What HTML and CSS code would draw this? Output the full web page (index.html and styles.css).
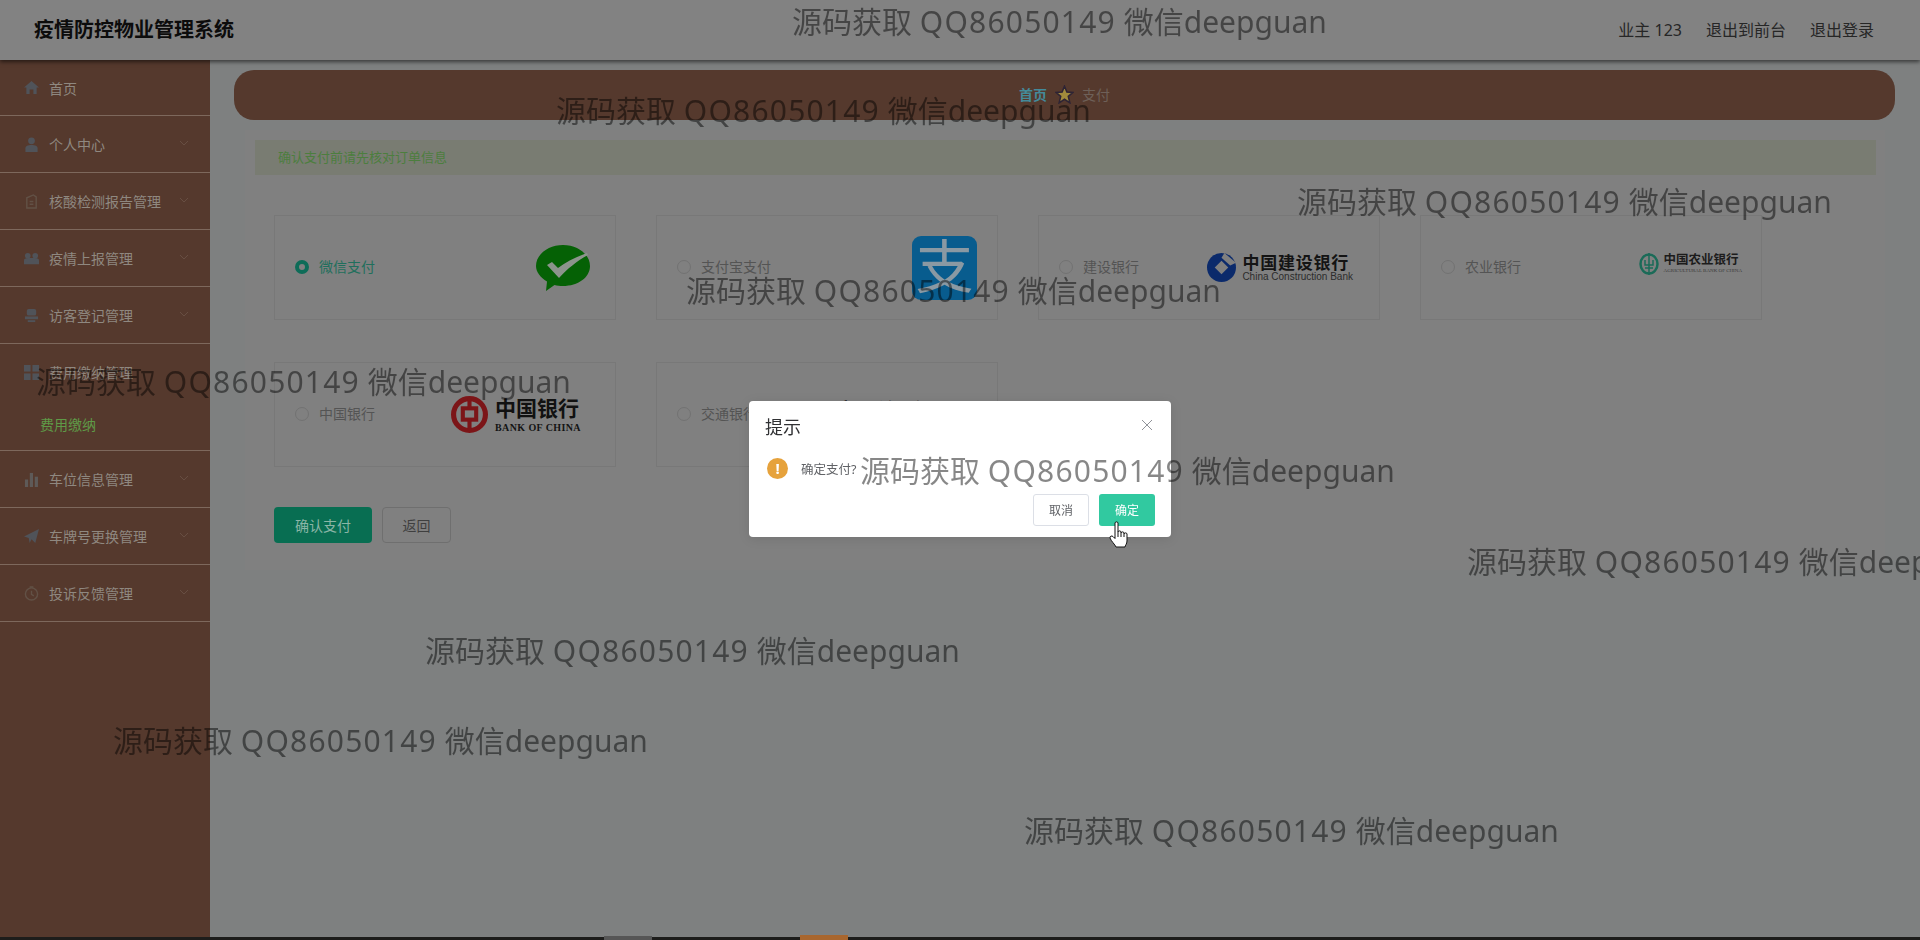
FILE: index.html

```html
<!DOCTYPE html>
<html lang="zh-CN">
<head>
  <meta charset="UTF-8">
  <title>疫情防控物业管理系统</title>
  <link rel="stylesheet" href="styles.css">
</head>
<body>

<header class="topbar">
  <div class="brand">疫情防控物业管理系统</div>
  <nav class="top-links">
    <a>业主 123</a>
    <a>退出到前台</a>
    <a>退出登录</a>
  </nav>
</header>

<div class="main">
  <aside class="sidebar">
    <div class="menu-item menu-first">
      <svg class="menu-icon icon-blue" viewBox="0 0 16 16"><path d="M8 1 L16 8 H13.5 V15 H10 V10 H6 V15 H2.5 V8 H0 Z"/></svg>
      <span>首页</span>
    </div>
    <div class="menu-item">
      <svg class="menu-icon icon-blue" viewBox="0 0 16 16"><circle cx="8" cy="4" r="3.6"/><path d="M1.5 16 V12 C1.5 9.5 4 8.5 8 8.5 C12 8.5 14.5 9.5 14.5 12 V16 Z"/></svg>
      <span>个人中心</span>
      <svg class="chevron" viewBox="0 0 10 6"><path d="M1 1 L5 5 L9 1"/></svg>
    </div>
    <div class="menu-item">
      <svg class="menu-icon icon-faint" viewBox="0 0 16 16"><path d="M3 15 V4 L10 1 L13 3 V15 Z M6 8 H10 M6 11 H10" fill="none"/></svg>
      <span>核酸检测报告管理</span>
      <svg class="chevron" viewBox="0 0 10 6"><path d="M1 1 L5 5 L9 1"/></svg>
    </div>
    <div class="menu-item">
      <svg class="menu-icon icon-blue" viewBox="0 0 16 16"><circle cx="4" cy="5" r="3"/><circle cx="12" cy="5" r="3"/><path d="M0 14 V10 C0 8 2 7.5 8 7.5 C14 7.5 16 8 16 10 V14 Z"/></svg>
      <span>疫情上报管理</span>
      <svg class="chevron" viewBox="0 0 10 6"><path d="M1 1 L5 5 L9 1"/></svg>
    </div>
    <div class="menu-item">
      <svg class="menu-icon icon-blue" viewBox="0 0 16 16"><rect x="3" y="1" width="10" height="7" rx="2"/><rect x="1" y="9" width="14" height="3"/><rect x="4" y="13" width="8" height="2"/></svg>
      <span>访客登记管理</span>
      <svg class="chevron" viewBox="0 0 10 6"><path d="M1 1 L5 5 L9 1"/></svg>
    </div>
    <div class="menu-group">
      <div class="menu-head">
        <svg class="menu-icon icon-blue" viewBox="0 0 16 16"><rect x="0" y="0" width="7" height="7"/><rect x="9" y="0" width="7" height="7"/><rect x="0" y="9" width="7" height="7"/><rect x="9" y="9" width="7" height="7"/></svg>
        <span>费用缴纳管理</span>
      </div>
      <div class="menu-sub">费用缴纳</div>
    </div>
    <div class="menu-item">
      <svg class="menu-icon icon-grey" viewBox="0 0 16 16"><rect x="1" y="8" width="3.4" height="8"/><rect x="6.2" y="1" width="3.4" height="15"/><rect x="11.5" y="5" width="3.4" height="11"/></svg>
      <span>车位信息管理</span>
      <svg class="chevron" viewBox="0 0 10 6"><path d="M1 1 L5 5 L9 1"/></svg>
    </div>
    <div class="menu-item">
      <svg class="menu-icon icon-blue" viewBox="0 0 16 16"><path d="M16 0 L12 15 L8 11 L6 15 L5 9.5 L0 8 Z"/></svg>
      <span>车牌号更换管理</span>
      <svg class="chevron" viewBox="0 0 10 6"><path d="M1 1 L5 5 L9 1"/></svg>
    </div>
    <div class="menu-item">
      <svg class="menu-icon icon-faint" viewBox="0 0 16 16"><circle cx="8" cy="8.5" r="6.5" fill="none"/><path d="M8 5 V9 L10.5 10.5 M6 1 H10" fill="none"/></svg>
      <span>投诉反馈管理</span>
      <svg class="chevron" viewBox="0 0 10 6"><path d="M1 1 L5 5 L9 1"/></svg>
    </div>
  </aside>

  <main class="content">
    <div class="crumbs">
      <span class="crumb-home">首页</span>
      <svg class="crumb-star" viewBox="0 0 16 16"><path d="M8 1 L10 6 L15 6.3 L11.2 9.6 L12.5 15 L8 12 L3.5 15 L4.8 9.6 L1 6.3 L6 6 Z"/></svg>
      <span class="crumb-now">支付</span>
    </div>

    <section class="pay-panel">
      <div class="alert">确认支付前请先核对订单信息</div>

      <div class="pay-grid">
        <label class="pay-card">
          <span class="radio radio-on"></span>
          <span class="pay-name name-on">微信支付</span>
          <svg class="logo-wechat" viewBox="0 0 54 46">
            <path class="wechat-bubble" d="M27 0 C42 0 54 9.500 54 21 C54 32.500 42 41 27 41 C24 41 21 40.700 18.500 40 L10 46 L11 36.500 C4.500 32.500 0 27 0 21 C0 9.500 12 0 27 0 Z"/>
            <path class="wechat-tick" d="M11 20 L16 17 L22 23 C30 17 40 12 51 8 L52 10 C41 16 31 24 23 33 Z"/>
          </svg>
        </label>

        <label class="pay-card">
          <span class="radio"></span>
          <span class="pay-name">支付宝支付</span>
          <div class="logo-alipay">支</div>
        </label>

        <label class="pay-card">
          <span class="radio"></span>
          <span class="pay-name">建设银行</span>
          <div class="logo-bank logo-ccb">
            <svg class="ccb-mark" viewBox="0 0 30 30">
              <circle cx="15" cy="15" r="15" fill="#0b2a6b"/>
              <path d="M15 8 L22 15 L15 22 L8 15 Z" fill="#7f7f7f"/>
              <path d="M18 0 L30 10 L24 13 L15 5 Z" fill="#7f7f7f"/>
            </svg>
            <div>
              <div class="ccb-cn">中国建设银行</div>
              <div class="ccb-en">China Construction Bank</div>
            </div>
          </div>
        </label>

        <label class="pay-card">
          <span class="radio"></span>
          <span class="pay-name">农业银行</span>
          <div class="logo-bank logo-abc">
            <svg class="abc-mark" viewBox="0 0 20 22">
              <ellipse cx="10" cy="11" rx="8.500" ry="9.500" fill="none" stroke="#1b6b58" stroke-width="2.500"/>
              <path d="M10 0 V22 M6 7 V12 H14 V7 M6 15 H14" fill="none" stroke="#1b6b58" stroke-width="1.500"/>
            </svg>
            <div>
              <div class="abc-cn">中国农业银行</div>
              <div class="abc-en">AGRICULTURAL BANK OF CHINA</div>
            </div>
          </div>
        </label>

        <label class="pay-card">
          <span class="radio"></span>
          <span class="pay-name">中国银行</span>
          <div class="logo-bank logo-boc">
            <svg class="boc-mark" viewBox="0 0 36 36">
              <circle cx="18" cy="18" r="15.500" fill="none" stroke="#7c1518" stroke-width="5"/>
              <rect x="11.500" y="12" width="13" height="11" fill="none" stroke="#7c1518" stroke-width="4"/>
              <path d="M18 2 V12 M18 23 V34" stroke="#7c1518" stroke-width="4"/>
            </svg>
            <div>
              <div class="boc-cn">中国银行</div>
              <div class="boc-en">BANK OF CHINA</div>
            </div>
          </div>
        </label>

        <label class="pay-card">
          <span class="radio"></span>
          <span class="pay-name">交通银行</span>
          <div class="logo-comm">交通银行</div>
        </label>
      </div>

      <div class="actions">
        <button class="btn-confirm">确认支付</button>
        <button class="btn-back">返回</button>
      </div>
    </section>
  </main>
</div>

<div class="taskbar">
  <span class="task task-grey"></span>
  <span class="task task-orange"></span>
</div>

<!-- confirm dialog -->
<div class="dialog-wrap">
  <div class="dialog">
    <div class="dialog-head">
      <span class="dialog-title">提示</span>
      <svg class="dialog-close" viewBox="0 0 12 12"><path d="M1 1 L11 11 M11 1 L1 11"/></svg>
    </div>
    <div class="dialog-body">
      <span class="warn-icon">!</span>
      <span class="dialog-msg">确定支付?</span>
    </div>
    <div class="dialog-btns">
      <button class="btn-cancel">取消</button>
      <button class="btn-ok">确定</button>
    </div>
  </div>
</div>

<!-- repeated text stamped over the whole page -->
<div class="marks">
  <div class="mark mark-1">源码获取 <span class="mark-qq">QQ86050149</span> 微信deepguan</div>
  <div class="mark mark-2">源码获取 <span class="mark-qq">QQ86050149</span> 微信deepguan</div>
  <div class="mark mark-3">源码获取 <span class="mark-qq">QQ86050149</span> 微信deepguan</div>
  <div class="mark mark-4">源码获取 <span class="mark-qq">QQ86050149</span> 微信deepguan</div>
  <div class="mark mark-5">源码获取 <span class="mark-qq">QQ86050149</span> 微信deepguan</div>
  <div class="mark mark-6">源码获取 <span class="mark-qq">QQ86050149</span> 微信deepguan</div>
  <div class="mark mark-7">源码获取 <span class="mark-qq">QQ86050149</span> 微信deepguan</div>
  <div class="mark mark-8">源码获取 <span class="mark-qq">QQ86050149</span> 微信deepguan</div>
  <div class="mark mark-9">源码获取 <span class="mark-qq">QQ86050149</span> 微信deepguan</div>
  <div class="mark mark-10">源码获取 <span class="mark-qq">QQ86050149</span> 微信deepguan</div>
</div>

<svg class="hand" viewBox="0 0 20 27">
  <path d="M6 2 C6 0.500 9 0.500 9 2 V11 C9 9.500 12 9.500 12 11 V12 C12 10.500 15 10.500 15 12 V13 C15 11.500 18 11.500 18 13 V20 C18 23 16 24.500 16 26 H7 C6 23.500 2 20 1 17 C0.500 15 3 14.500 4 15.500 L6 17.500 Z"/>
  <path d="M9 11 V16 M12 12 V16 M15 13 V16"/>
</svg>

</body>
</html>
```

FILE: styles.css

```css
/* colours are the dimmed ones, the whole page sits behind the dialog's mask */
* {
  box-sizing: border-box;
}

html, body {
  height: 100%;
}

body {
  margin: 0;
  height: 940px;
  overflow: hidden;
  display: flex;
  flex-direction: column;
  background-color: #7e8080;
  font-family: "Noto Sans", "Noto Sans CJK SC", sans-serif;
  font-size: 14px;
  color: #545454;
}

.topbar {
  height: 60px;
  flex-shrink: 0;
  display: flex;
  align-items: center;
  justify-content: space-between;
  padding: 0 46px 0 34px;
  background-color: #828282;
  box-shadow: 0 2px 4px rgba(0,0,0,0.55);
  position: relative;
}

.brand {
  font-size: 20px;
  font-weight: bold;
  color: #0c0c0c;
  line-height: 62px;
}

.top-links {
  display: flex;
  gap: 24px;
  font-size: 16px;
  line-height: 20px;
  margin-bottom: 1px;
  color: #262626;
}

.main {
  flex: 1;
  display: flex;
  min-height: 0;
}

.sidebar {
  width: 210px;
  flex-shrink: 0;
  background-color: #55392d;
  color: #8f8880;
}

.menu-item, .menu-head {
  height: 57px;
  display: flex;
  align-items: center;
  padding-left: 24px;
  position: relative;
}

.menu-item {
  border-bottom: 1px solid #7d685c;
}

.menu-first {
  height: 56px;
}

.menu-group {
  height: 107px;
  border-bottom: 1px solid #7d685c;
}

.menu-head {
  height: 56px;
}

.menu-sub {
  height: 50px;
  line-height: 50px;
  padding-left: 40px;
  color: #5f9a47;
}

.menu-icon {
  width: 15px;
  height: 15px;
  margin-right: 10px;
  flex-shrink: 0;
}

.icon-blue {
  fill: #505359;
}

.icon-grey {
  fill: #5e5a58;
}

.icon-faint {
  fill: none;
  stroke: #625146;
  stroke-width: 1.5;
}

.chevron {
  width: 10px;
  height: 6px;
  position: absolute;
  right: 21px;
  top: 24px;
  fill: none;
  stroke: #674e42;
  stroke-width: 1;
}

.content {
  flex: 1;
  padding: 10px 25px 0 24px;
  min-width: 0;
}

.crumbs {
  height: 50px;
  display: flex;
  align-items: center;
  justify-content: center;
  gap: 8px;
  padding: 0 0 2px 0;
  border-radius: 20px;
  background-color: #55392d;
}

.crumb-home {
  font-weight: bold;
  color: #448a9a;
}

.crumb-star {
  width: 19px;
  height: 19px;
  fill: #a18b3c;
  stroke: #2e2434;
  stroke-width: 1.3;
}

.crumb-now {
  color: #6e6058;
}

.pay-panel {
  margin: 10px 10px 0 11px;
  padding: 10px 9px 27px 10px;
  background-color: #808080;
}

.alert {
  height: 35px;
  line-height: 35px;
  padding-left: 23px;
  font-size: 13px;
  color: #4c7e3e;
  background-color: #797c72;
}

.pay-grid {
  margin: 40px 0 0 19px;
  display: grid;
  grid-template-columns: repeat(4, 342px);
  grid-auto-rows: 105px;
  gap: 42px 40px;
}

.pay-card {
  display: flex;
  align-items: center;
  padding-left: 20px;
  border: 1px solid #787878;
}

.radio {
  width: 14px;
  height: 14px;
  margin-right: 10px;
  margin-bottom: 2px;
  flex-shrink: 0;
  border: 1px solid #727272;
  border-radius: 50%;
}

.radio-on {
  border: 4px solid #0e6c58;
  background-color: #808080;
}

.pay-name {
  margin-bottom: 4px;
  color: #545454;
}

.name-on {
  color: #1f6f5c;
}

.logo-wechat {
  width: 54px;
  height: 46px;
  margin-left: auto;
  margin-right: 25px;
}

.wechat-bubble {
  fill: #056105;
}

.wechat-tick {
  fill: #8c948c;
}

.logo-alipay {
  width: 65px;
  height: 64px;
  margin-left: auto;
  margin-right: 20px;
  border-radius: 9px;
  background-color: #085c8e;
  color: #8a99a3;
  font-size: 58px;
  line-height: 60px;
  text-align: center;
}

.logo-bank {
  margin-left: auto;
  display: flex;
  align-items: center;
  color: #141414;
}

.logo-ccb {
  margin-right: 26px;
  gap: 6px;
}

.ccb-mark {
  width: 29px;
  height: 29px;
}

.ccb-cn {
  font-size: 17px;
  font-weight: bold;
  line-height: 17px;
  letter-spacing: 0.8px;
}

.ccb-en {
  font-family: "Liberation Sans", sans-serif;
  font-size: 10px;
  line-height: 11px;
  color: #2c2c2c;
}

.logo-abc {
  margin-right: 19px;
  margin-bottom: 8px;
  gap: 5px;
}

.abc-mark {
  width: 20px;
  height: 22px;
}

.abc-cn {
  font-size: 12.500px;
  font-weight: bold;
  line-height: 15px;
  color: #1c1c1c;
}

.abc-en {
  font-family: "Liberation Serif", serif;
  font-size: 5px;
  line-height: 8px;
  white-space: nowrap;
  color: #3a3a3a;
}

.logo-boc {
  margin-right: 34px;
  gap: 7px;
}

.boc-mark {
  width: 37px;
  height: 37px;
}

.boc-cn {
  font-size: 21px;
  font-weight: bold;
  line-height: 26px;
  color: #111111;
}

.boc-en {
  font-family: "Liberation Serif", serif;
  font-size: 10px;
  font-weight: bold;
  line-height: 13px;
  letter-spacing: 0.4px;
  white-space: nowrap;
}

.logo-comm {
  margin-left: auto;
  margin-right: 60px;
  margin-bottom: 3px;
  font-size: 26px;
  line-height: 30px;
  font-weight: bold;
  color: #101010;
}

.actions {
  margin: 40px 0 0 19px;
  display: flex;
  gap: 10px;
}

.actions button {
  height: 36px;
  border-radius: 4px;
  font-family: inherit;
  font-size: 14px;
  padding: 0;
}

.btn-confirm {
  width: 98px;
  border: none;
  background-color: #086e52;
  color: #8ab5a6;
}

.btn-back {
  width: 69px;
  border: 1px solid #6f6f6f;
  background-color: #808080;
  color: #3f3f3f;
}

.taskbar {
  height: 3px;
  flex-shrink: 0;
  position: relative;
  background-color: #1d1d1b;
}

.task {
  position: absolute;
  bottom: 0;
  width: 48px;
}

.task-grey {
  left: 604px;
  height: 4px;
  background-color: #565656;
}

.task-orange {
  left: 800px;
  height: 5px;
  background-color: #a8662e;
}

.dialog-wrap {
  position: fixed;
  top: 0;
  left: 0;
  right: 0;
  bottom: 0;
  display: flex;
  align-items: center;
  justify-content: center;
  padding-bottom: 2px;
}

.dialog {
  width: 422px;
  height: 136px;
  display: flex;
  flex-direction: column;
  border-radius: 4px;
  background-color: #ffffff;
  box-shadow: 0 2px 12px rgba(0,0,0,0.1);
}

.dialog-head {
  height: 49px;
  padding: 12px 18px 0 16px;
  display: flex;
  justify-content: space-between;
}

.dialog-title {
  font-size: 18px;
  line-height: 28px;
  color: #303133;
}

.dialog-close {
  width: 12px;
  height: 12px;
  margin-top: 6px;
  fill: none;
  stroke: #909399;
  stroke-width: 1;
}

.dialog-body {
  height: 36px;
  padding-left: 18px;
  display: flex;
  align-items: center;
}

.warn-icon {
  width: 21px;
  height: 21px;
  margin-right: 13px;
  border-radius: 50%;
  background-color: #e6a23c;
  color: #ffffff;
  font-size: 15px;
  font-weight: bold;
  line-height: 21px;
  text-align: center;
}

.dialog-msg {
  font-size: 12.500px;
  color: #606266;
}

.dialog-btns {
  margin-top: 8px;
  padding-right: 16px;
  display: flex;
  justify-content: flex-end;
  gap: 10px;
}

.dialog-btns button {
  width: 56px;
  height: 32px;
  padding: 0;
  border-radius: 3px;
  font-family: inherit;
  font-size: 12px;
}

.btn-cancel {
  border: 1px solid #dcdfe6;
  background-color: #ffffff;
  color: #606266;
}

.btn-ok {
  border: none;
  background-color: #31c9a0;
  color: #ffffff;
}

.marks {
  position: fixed;
  top: 0;
  left: 0;
  right: 0;
  bottom: 0;
  overflow: hidden;
  pointer-events: none;
}

.mark {
  position: absolute;
  font-family: "Noto Sans", "Noto Sans CJK SC", sans-serif;
  font-size: 30px;
  line-height: 40px;
  white-space: nowrap;
  color: rgba(0,0,0,0.47);
}

.mark-qq {
  letter-spacing: 1.2px;
}

.mark-1 { left: 792px; top: 2px; }
.mark-2 { left: 556px; top: 91px; }
.mark-3 { left: 1297px; top: 182px; }
.mark-4 { left: 686px; top: 271px; }
.mark-5 { left: 36px; top: 362px; }
.mark-6 { left: 860px; top: 451px; }
.mark-7 { left: 1467px; top: 542px; }
.mark-8 { left: 425px; top: 631px; }
.mark-9 { left: 113px; top: 721px; }
.mark-10 { left: 1024px; top: 811px; }

.hand {
  position: fixed;
  left: 1109px;
  top: 521px;
  width: 20px;
  height: 27px;
  fill: #ffffff;
  stroke: #111111;
  stroke-width: 1;
}
```
